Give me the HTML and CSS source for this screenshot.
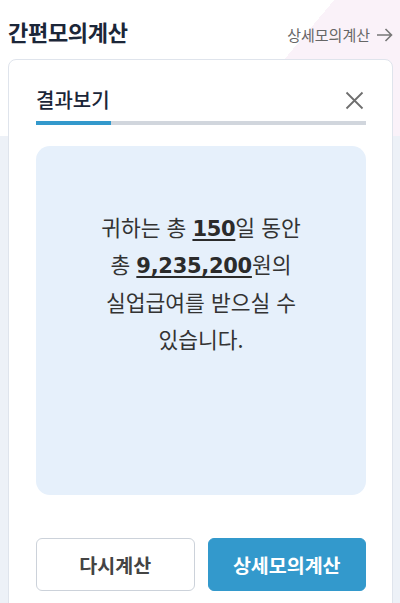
FILE: index.html
```html
<!DOCTYPE html>
<html lang="ko">
<head>
<meta charset="utf-8">
<link rel="stylesheet" href="styles.css">
</head>
<body>
<div class="page">
  <header class="top">
    <h1 class="title">간편모의계산</h1>
    <a class="detail-link" href="#">상세모의계산
      <svg class="arrow" width="17" height="14" viewBox="0 0 17 14"><path d="M1 7H15.5M9.5 1L15.5 7L9.5 13" fill="none" stroke="#777" stroke-width="1.6"/></svg>
    </a>
  </header>
  <section class="card">
    <div class="card-head">
      <h2 class="card-title">결과보기</h2>
      <svg class="close" width="19" height="19" viewBox="0 0 19 19"><path d="M1.5 1.5L17.5 17.5M17.5 1.5L1.5 17.5" stroke="#6e6e6e" stroke-width="1.8" fill="none"/></svg>
    </div>
    <div class="progress"><div class="progress-fill"></div></div>
    <div class="result">
      <p class="result-text">귀하는 총 <b class="num">150</b>일 동안<br>총 <b class="num">9,235,200</b>원의<br>실업급여를 받으실 수<br>있습니다.</p>
    </div>
    <div class="actions">
      <button class="btn btn-outline">다시계산</button>
      <button class="btn btn-primary">상세모의계산</button>
    </div>
  </section>
</div>
</body>
</html>
```

FILE: styles.css
```css
* { box-sizing: border-box; }
html, body { margin: 0; padding: 0; }
body {
  width: 400px;
  height: 603px;
  overflow: hidden;
  font-family: "Noto Sans CJK KR", "Noto Sans", sans-serif;
  background:
    linear-gradient(130deg, #ffffff 65%, #faf2f9 65%) 0 0 / 400px 136px no-repeat,
    #edf1f7;
}
.page { padding: 0 7px 0 8px; }
.top {
  display: flex;
  justify-content: space-between;
  align-items: flex-start;
  padding-top: 15px;
  height: 59px;
}
.title {
  margin: 0;
  font-size: 22px;
  line-height: 32px;
  font-weight: 700;
  color: #1b2638;
  letter-spacing: -0.3px;
}
.detail-link {
  display: flex;
  align-items: center;
  gap: 6px;
  margin-top: 9px;
  font-size: 15px;
  line-height: 21px;
  color: #666;
  text-decoration: none;
}
.arrow { display: block; }
.card {
  background: #fff;
  border: 1px solid #dfe4ec;
  border-radius: 8px;
  padding: 26px 26px 0 27px;
  height: 560px;
}
.card-head {
  display: flex;
  justify-content: space-between;
  align-items: center;
  height: 28px;
}
.card-title {
  margin: 0;
  font-size: 20px;
  font-weight: 500;
  color: #1b2638;
  line-height: 28px;
}
.close { display: block; margin-right: 2px; }
.progress {
  margin-top: 7px;
  height: 4px;
  background: #d1d6dd;
}
.progress-fill {
  width: 75px;
  height: 4px;
  background: #3399cc;
}
.result {
  margin-top: 21px;
  height: 349px;
  background: #e6f0fb;
  border-radius: 14px;
  padding-top: 62px;
}
.result-text {
  margin: 0;
  text-align: center;
  font-size: 21.5px;
  line-height: 37.3px;
  color: #333;
  font-weight: 400;
}
.num {
  font-family: "DejaVu Sans", Inter, sans-serif;
  font-weight: 700;
  font-size: 21px;
  line-height: 1;
  color: #2b2b2b;
  text-decoration: underline;
  text-decoration-thickness: 2px;
  text-underline-offset: 3px;
  letter-spacing: -0.3px;
}
.actions {
  display: flex;
  gap: 13px;
  margin-top: 43px;
}
.btn {
  flex: 1;
  height: 53px;
  border-radius: 6px;
  font-family: "Noto Sans CJK KR", sans-serif;
  font-size: 19.5px;
  font-weight: 700;
  cursor: pointer;
}
.btn-outline {
  background: #fff;
  border: 1px solid #ccd2da;
  color: #444;
}
.btn-primary {
  background: #3399cc;
  border: 1px solid #3399cc;
  color: #fff;
}
```
